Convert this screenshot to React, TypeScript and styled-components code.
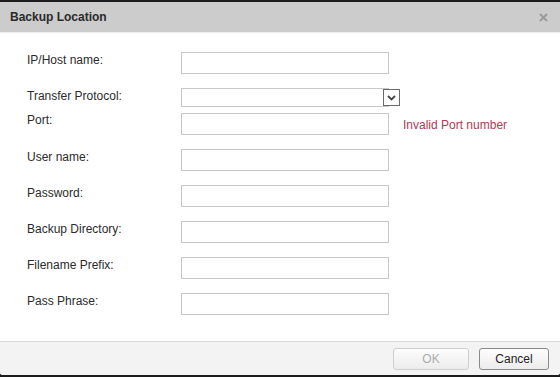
import React from "react";
import styled, { createGlobalStyle } from "styled-components";

const GlobalStyle = createGlobalStyle`
  html, body {
    margin: 0;
    padding: 0;
    background: #1c1c1c;
  }
  body {
    font-family: Arial, "Liberation Sans", sans-serif;
    font-size: 12px;
    color: #333;
  }
`;

const Dialog = styled.div`
  margin-top: 2px;
  width: 560px;
  height: 373px;
  display: flex;
  flex-direction: column;
  background: #fff;
  border-radius: 0 0 3px 3px;
  overflow: hidden;
`;

const Header = styled.div`
  height: 30px;
  flex: none;
  display: flex;
  align-items: center;
  justify-content: space-between;
  padding: 0 12px 0 10px;
  background: #cccccc;
  border-bottom: 1px solid #eeeeee;
`;

const Title = styled.h1`
  margin: 0;
  font-size: 12px;
  font-weight: bold;
  color: #2a2a2a;
`;

const CloseButton = styled.button`
  border: none;
  background: none;
  padding: 0;
  width: 9px;
  height: 9px;
  display: flex;
  cursor: pointer;
`;

const Body = styled.div`
  flex: 1;
  padding: 19px 0 0 27px;
`;

const Row = styled.div<{ $height: number }>`
  display: flex;
  align-items: flex-start;
  height: ${(p) => p.$height}px;
`;

const Label = styled.label<{ $offset?: number }>`
  width: 154px;
  flex: none;
  padding-top: ${(p) => p.$offset ?? 1}px;
  line-height: 14px;
  font-size: 12px;
  color: #2b2b2b;
`;

const TextInput = styled.input`
  box-sizing: border-box;
  width: 208px;
  height: 22px;
  margin: 0;
  padding: 0 4px;
  border: 1px solid #c8c8c8;
  background: #fff;
  font: inherit;
  outline: none;
`;

const SelectWrap = styled.div`
  display: flex;
  align-items: center;
`;

const SelectBox = styled.div`
  box-sizing: border-box;
  width: 208px;
  height: 19px;
  border: 1px solid #c8c8c8;
  background: #fff;
`;

const SelectButton = styled.div`
  box-sizing: border-box;
  width: 17px;
  height: 17px;
  margin-left: -6px;
  border: 1px solid #6a6a6a;
  background: #fff;
  display: flex;
  align-items: center;
  justify-content: center;
`;

const ErrorText = styled.span`
  margin-left: 14px;
  padding-top: 5px;
  line-height: 14px;
  color: #b23a55;
  font-size: 12px;
`;

const Footer = styled.div`
  height: 33px;
  flex: none;
  display: flex;
  align-items: center;
  justify-content: flex-end;
  gap: 10px;
  padding-right: 11px;
  background: #f3f3f3;
  border-top: 1px solid #dadada;
`;

const Button = styled.button<{ $disabled?: boolean; $width: number }>`
  box-sizing: border-box;
  width: ${(p) => p.$width}px;
  height: 22px;
  margin-top: 1px;
  border-radius: 3px;
  border: 1px solid ${(p) => (p.$disabled ? "#cfcfcf" : "#8a8a8a")};
  background: linear-gradient(#fdfdfd, #ececec);
  color: ${(p) => (p.$disabled ? "#ababab" : "#1f1f1f")};
  font-family: Arial, "Liberation Sans", sans-serif;
  font-size: 12px;
  padding: 0;
  cursor: ${(p) => (p.$disabled ? "default" : "pointer")};
`;

const fields: { label: string; offset?: number }[] = [
  { label: "User name:", offset: 1 },
  { label: "Password:" },
  { label: "Backup Directory:" },
  { label: "Filename Prefix:" },
  { label: "Pass Phrase:" },
];

export default function App() {
  return (
    <>
      <GlobalStyle />
      <Dialog>
        <Header>
          <Title>Backup Location</Title>
          <CloseButton aria-label="Close">
            <svg width="9" height="9" viewBox="0 0 9 9">
              <path d="M1 1 L8 8 M8 1 L1 8" stroke="#9a9a9a" strokeWidth="2" />
            </svg>
          </CloseButton>
        </Header>
        <Body>
          <Row $height={36}>
            <Label $offset={1}>IP/Host name:</Label>
            <TextInput />
          </Row>
          <Row $height={25}>
            <Label $offset={1}>Transfer Protocol:</Label>
            <SelectWrap>
              <SelectBox />
              <SelectButton>
                <svg width="9" height="6" viewBox="0 0 9 6">
                  <path d="M1 1 L4.5 4.5 L8 1" stroke="#444" strokeWidth="1.8" fill="none" />
                </svg>
              </SelectButton>
            </SelectWrap>
          </Row>
          <Row $height={36}>
            <Label $offset={0}>Port:</Label>
            <TextInput />
            <ErrorText>Invalid Port number</ErrorText>
          </Row>
          {fields.map((f) => (
            <Row key={f.label} $height={36}>
              <Label $offset={f.offset}>{f.label}</Label>
              <TextInput />
            </Row>
          ))}
        </Body>
        <Footer>
          <Button $disabled $width={76}>OK</Button>
          <Button $width={70}>Cancel</Button>
        </Footer>
      </Dialog>
    </>
  );
}
